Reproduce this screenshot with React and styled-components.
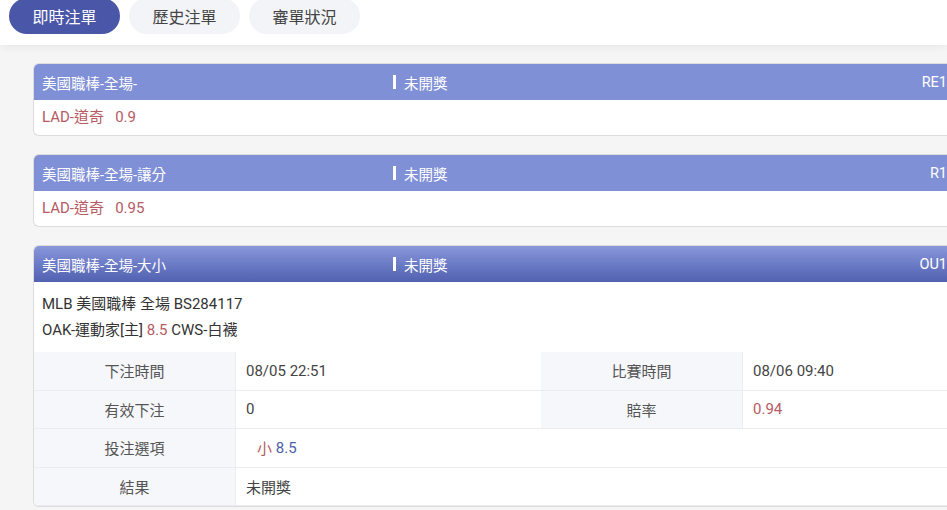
import React from "react";
import styled, { createGlobalStyle, css } from "styled-components";

const Global = createGlobalStyle`
  html, body { margin: 0; padding: 0; background: #f5f5f5; }
  body { font-family: Roboto, "Noto Sans CJK TC", sans-serif; overflow: hidden; }
  * { box-sizing: border-box; }
`;

const Page = styled.div`
  width: 947px;
  height: 510px;
  overflow: hidden;
  background: #f5f5f5;
`;

const TopBar = styled.div`
  height: 45px;
  background: #fff;
  display: flex;
  align-items: flex-start;
  gap: 9px;
  padding-left: 9px;
  box-shadow: 0 2px 8px rgba(0, 0, 0, 0.06);
  position: relative;
`;

const Tab = styled.div`
  margin-top: -2px;
  width: 111px;
  height: 36px;
  border-radius: 18px;
  display: flex;
  align-items: center;
  justify-content: center;
  font-size: 16px;
  color: #444;
  background: #f3f4f8;
  ${(p) =>
    p.$active &&
    css`
      background: #4a56a8;
      color: #fff;
    `}
`;

const List = styled.div`
  padding: 18px 0 0 33px;
  margin-right: -9px;
  display: flex;
  flex-direction: column;
  gap: 18px;
`;

const Card = styled.div`
  background: #fff;
  border: 1px solid #dcdcdc;
  border-right: none;
  border-radius: 6px 0 0 6px;
  overflow: hidden;
`;

const CardHead = styled.div`
  height: 36px;
  display: flex;
  align-items: center;
  padding: 0 9px 0 8px;
  color: #fff;
  font-size: 14.5px;
  background: ${(p) =>
    p.$gradient
      ? "linear-gradient(to bottom, #8a97da 0%, #6f7ec8 45%, #5261b0 100%)"
      : "#8090d6"};
`;

const Title = styled.div`
  width: 351px;
`;

const Status = styled.div`
  flex: 1;
  display: flex;
  align-items: center;
  &::before {
    content: "";
    width: 3px;
    height: 14px;
    background: #fff;
    margin-right: 8px;
  }
`;

const Code = styled.div`
  text-align: right;
`;

const BetLine = styled.div`
  height: 35px;
  line-height: 35px;
  padding-left: 8px;
  font-size: 15px;
  color: #b65a63;
  white-space: pre;
`;

const Info = styled.div`
  padding: 9px 8px;
  font-size: 15px;
  line-height: 26px;
  color: #333;
`;

const Red = styled.span`
  color: #b65a63;
`;

const Blue = styled.span`
  color: #4b5ea8;
`;

const Table = styled.div`
  display: grid;
  grid-template-columns: 202px 305px 202px 1fr;
`;

const Label = styled.div`
  height: 38.5px;
  display: flex;
  align-items: center;
  justify-content: center;
  background: #f6f7fb;
  border-bottom: 1px solid #ebecf0;
  border-right: 1px solid #ebecf0;
  font-size: 15px;
  color: #555;
`;

const Value = styled.div`
  height: 38.5px;
  display: flex;
  align-items: center;
  padding-left: ${(p) => (p.$indent ? "21px" : "10px")};
  border-bottom: 1px solid #ebecf0;
  font-size: 15px;
  color: ${(p) => (p.$red ? "#b65a63" : "#444")};
  ${(p) => p.$wide && "grid-column: span 3;"}
`;

const simple = [
  { title: "美國職棒-全場-", code: "RE1", bet: "LAD-道奇   0.9" },
  { title: "美國職棒-全場-讓分", code: "R1", bet: "LAD-道奇   0.95" },
];

export default function App() {
  return (
    <Page>
      <Global />
      <TopBar>
        <Tab $active>即時注單</Tab>
        <Tab>歷史注單</Tab>
        <Tab>審單狀況</Tab>
      </TopBar>
      <List>
        {simple.map((s) => (
          <Card key={s.code}>
            <CardHead>
              <Title>{s.title}</Title>
              <Status>未開獎</Status>
              <Code>{s.code}</Code>
            </CardHead>
            <BetLine>{s.bet}</BetLine>
          </Card>
        ))}
        <Card>
          <CardHead $gradient>
            <Title>美國職棒-全場-大小</Title>
            <Status>未開獎</Status>
            <Code>OU1</Code>
          </CardHead>
          <Info>
            <div>MLB 美國職棒 全場 BS284117</div>
            <div>
              OAK-運動家[主] <Red>8.5</Red> CWS-白襪
            </div>
          </Info>
          <Table>
            <Label>下注時間</Label>
            <Value>08/05 22:51</Value>
            <Label>比賽時間</Label>
            <Value>08/06 09:40</Value>
            <Label>有效下注</Label>
            <Value>0</Value>
            <Label>賠率</Label>
            <Value $red>0.94</Value>
            <Label>投注選項</Label>
            <Value $wide $indent>
              <Red>小</Red>&nbsp;<Blue>8.5</Blue>
            </Value>
            <Label>結果</Label>
            <Value $wide>未開獎</Value>
          </Table>
        </Card>
      </List>
    </Page>
  );
}
